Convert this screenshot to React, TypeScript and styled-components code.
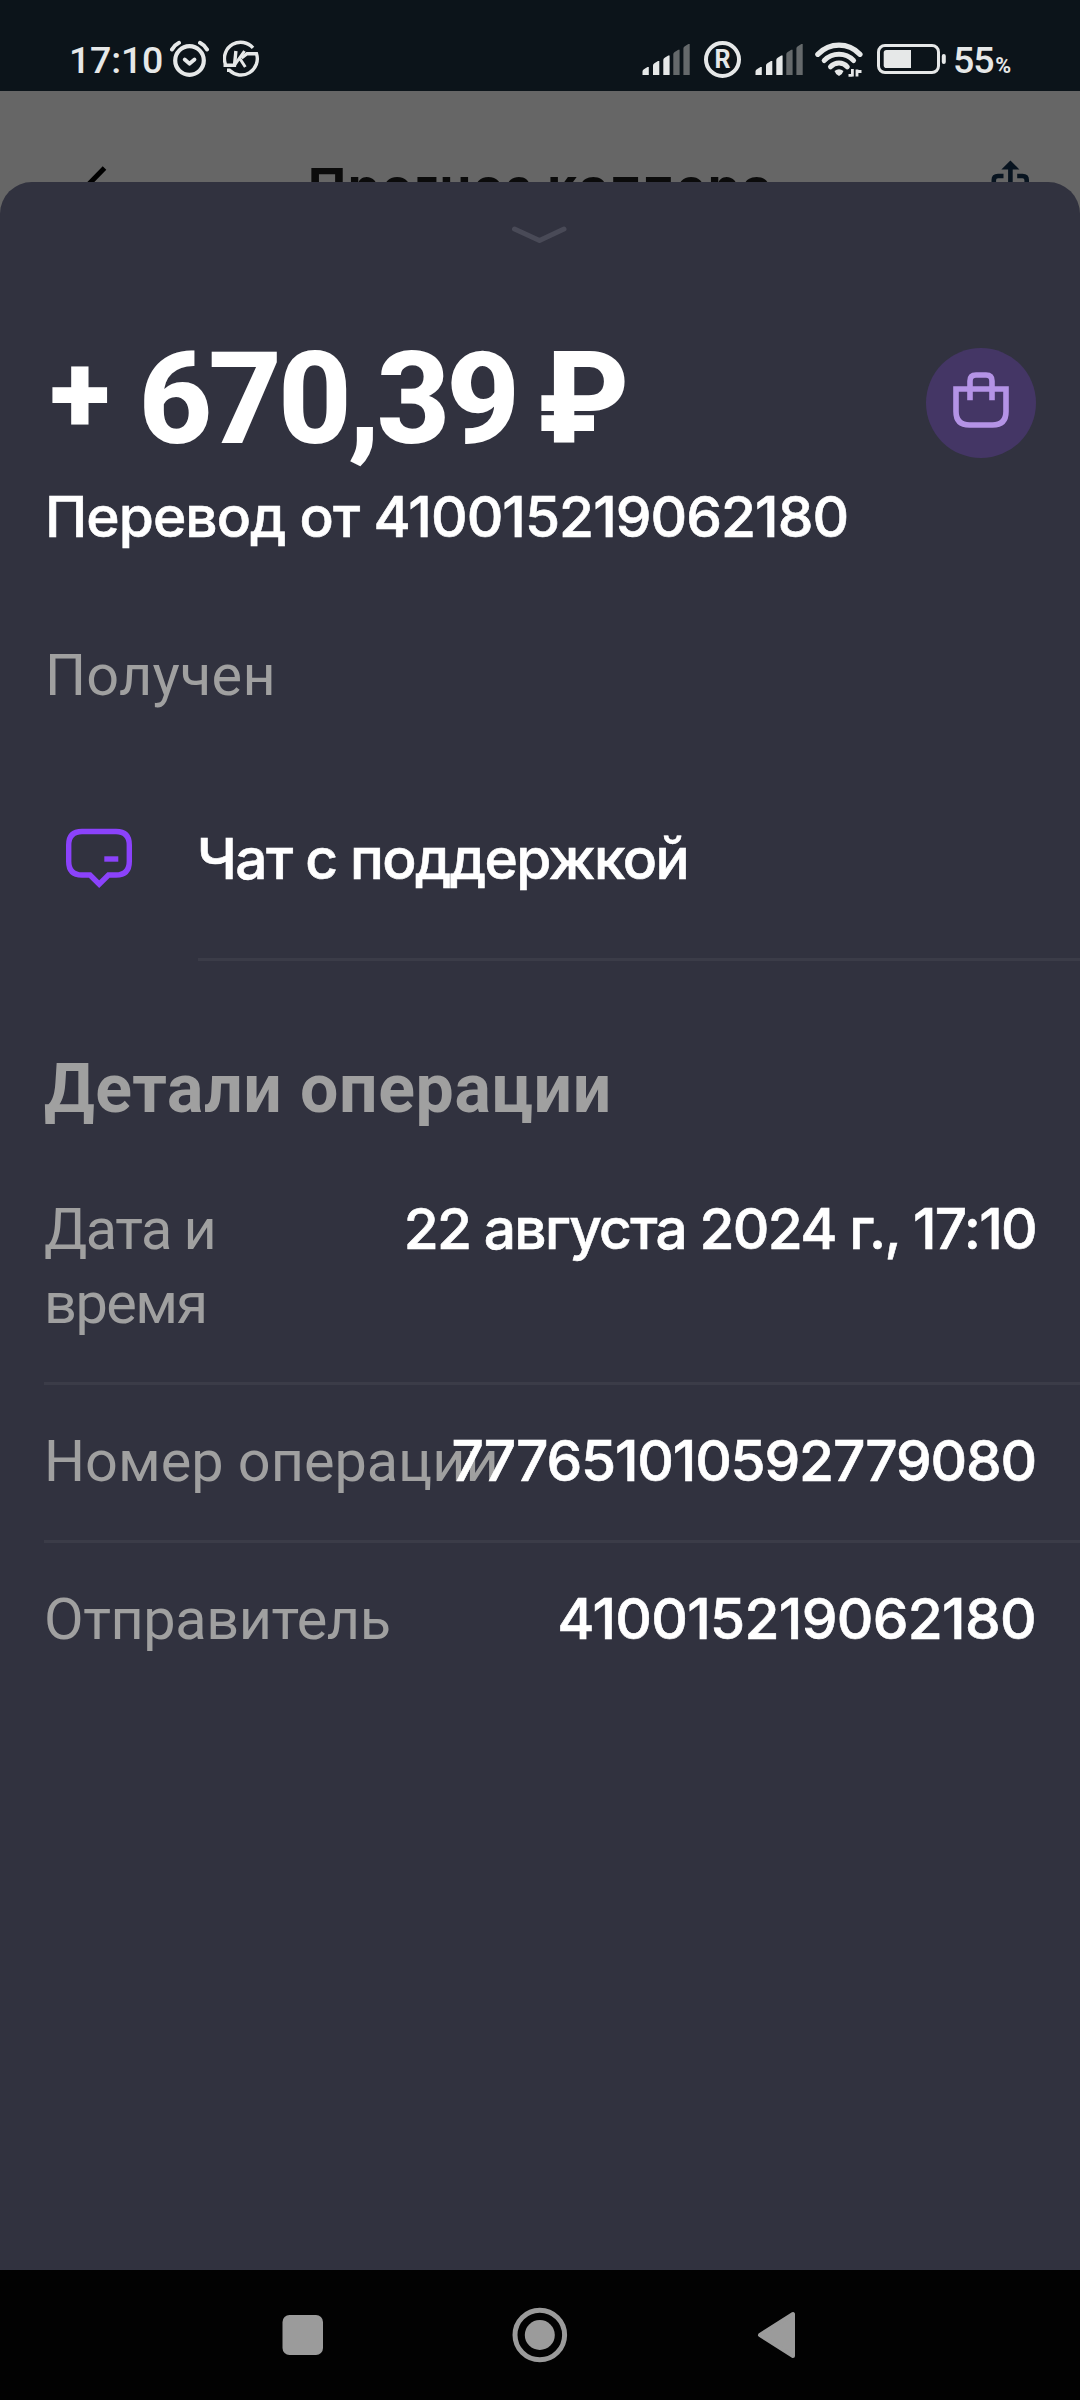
import React from 'react';
import styled, { createGlobalStyle } from 'styled-components';

const GlobalStyle = createGlobalStyle`
  *, *::before, *::after { box-sizing: border-box; }
  body { margin: 0; background: #31323f; }
`;

const ink = '#e6e8e8';

const Screen = styled.div`
  width: 1080px;
  height: 2400px;
  display: flex;
  flex-direction: column;
  overflow: hidden;
  background: #666666;
  font-family: Roboto, 'Noto Sans', sans-serif;
  color: #ffffff;
`;

const StatusBar = styled.header`
  flex: none;
  height: 91px;
  padding: 35px 0 0 69px;
  display: flex;
  align-items: flex-start;
  justify-content: space-between;
  background: #0c141a;
  color: ${ink};
`;

const StatusGroup = styled.div`
  display: flex;
  align-items: flex-start;
  height: 50px;
`;

const StatusIcon = styled.svg<{ $left?: number }>`
  display: block;
  flex: none;
  height: 50px;
  margin-left: ${(p) => p.$left ?? 0}px;
`;

const Clock = styled.span`
  width: 101px;
  font-size: 37.5px;
  font-weight: 500;
  line-height: 50px;
  letter-spacing: -0.2px;
`;

const Registered = styled.span`
  flex: none;
  width: 37px;
  height: 37px;
  margin: 6px 0 0 14px;
  border: 4px solid ${ink};
  border-radius: 50%;
  display: flex;
  align-items: center;
  justify-content: center;
  font-size: 25px;
  font-weight: 700;
  line-height: 29px;
`;

const Charge = styled.span`
  width: 134px;
  padding-left: 7px;
  font-size: 37.5px;
  font-weight: 500;
  line-height: 50px;
  letter-spacing: -1px;
`;

const Percent = styled.small`
  margin-left: 1.5px;
  font-size: 21.5px;
  font-weight: 700;
`;

const PageHeader = styled.div`
  flex: none;
  height: 91px;
  padding: 66px 48px 0 84px;
  display: flex;
  overflow: hidden;
`;

const HeaderTitle = styled.h1`
  flex: 1;
  margin: 0 0 0 178px;
  font-family: Inter, sans-serif;
  font-size: 51px;
  font-weight: 700;
  line-height: 60px;
  letter-spacing: 1.6px;
  color: #0b0b0b;
  white-space: nowrap;
`;

const HeaderIcon = styled.svg`
  display: block;
  flex: none;
  width: 46px;
  height: 46px;
`;

const SheetBackdrop = styled.div`
  flex: none;
  height: 2088px;
  background: linear-gradient(#666666 0 60px, #31323f 60px);
`;

const Sheet = styled.main`
  height: 2088px;
  border-radius: 32px 32px 0 0;
  background: #31323f;
  display: flex;
  flex-direction: column;
`;

const Grabber = styled.svg`
  display: block;
  flex: none;
  width: 60px;
  height: 20px;
  margin: 44px auto 92px;
`;

const Summary = styled.section`
  flex: none;
  display: flex;
  justify-content: space-between;
  padding: 0 44px 0 45px;
`;

const Amount = styled.div`
  margin-left: 5px;
  font-size: 128px;
  font-weight: 800;
  line-height: 122px;
  height: 120px;
  letter-spacing: -4.1px;
  word-spacing: -6px;
  white-space: nowrap;
`;

const Sign = styled.span`
  margin-right: 11px;
  font-size: 112px;
  font-weight: 900;
  line-height: 0;
  vertical-align: 11px;
`;

const Category = styled.div`
  width: 110px;
  height: 110px;
  margin-top: 10px;
  border-radius: 50%;
  background: #443665;
`;

const Value = styled.p<{ $spacing: number }>`
  margin: 0;
  font-family: Inter, sans-serif;
  font-size: 56.8px;
  font-weight: 500;
  -webkit-text-stroke: 0.6px #ffffff;
  line-height: 74px;
  letter-spacing: ${(p) => p.$spacing}px;
  white-space: nowrap;
`;

const Label = styled.p<{ $spacing: number; $nowrap?: boolean }>`
  margin: 0;
  padding-top: 1px;
  font-size: 57.6px;
  font-weight: 400;
  line-height: 74px;
  letter-spacing: ${(p) => p.$spacing}px;
  color: #a0a0a0;
  white-space: ${(p) => (p.$nowrap ? 'nowrap' : 'normal')};
`;

const Description = styled.div`
  padding: 22px 45px 0;
`;

const Status = styled.div`
  padding: 84px 45px 0;
`;

const SupportRow = styled.div`
  display: flex;
  margin-top: 108px;
  padding-left: 62px;
`;

const SupportBody = styled.div`
  flex: 1;
  margin-left: 63px;
  height: 140px;
  border-bottom: 3px solid #3b3c48;
`;

const SupportLabel = styled.div`
  padding-top: 1px;
  margin-left: -1px;
`;

const SectionTitle = styled.h2`
  margin: 88px 0 24px 44px;
  font-size: 68px;
  font-weight: 700;
  line-height: 80px;
  letter-spacing: 0.64px;
  color: #a0a0a0;
`;

const DetailRow = styled.div<{ $last?: boolean }>`
  display: flex;
  margin-left: 44px;
  padding: 39px 44px 41px 0;
  border-bottom: ${(p) => (p.$last ? 'none' : '3px solid #3b3c48')};
`;

const DetailLabel = styled.div`
  flex: 1 1 0;
  min-width: 0;
  max-width: 230px;
`;

const DetailValue = styled.div`
  flex: none;
  margin-left: auto;
`;

const NavBar = styled.nav`
  flex: none;
  height: 130px;
  padding: 0 280px;
  display: flex;
  align-items: center;
  justify-content: space-between;
  background: #020202;
`;

const NavIcon = styled.svg`
  display: block;
  width: 56px;
  height: 56px;
`;

function Signal({ left }: { left?: number }) {
  const bars = [
    { x: 0.5, top: 67, on: true },
    { x: 11, top: 61, on: true },
    { x: 21.3, top: 55.5, on: true },
    { x: 31.3, top: 49.7, on: false },
    { x: 41.4, top: 44, on: false },
  ];
  return (
    <StatusIcon $left={left} width="48" viewBox="0 35 48 50">
      {bars.map((b) => (
        <path
          key={b.x}
          d={`M${b.x} ${b.top + 4.5}Q${b.x} ${b.top + 3} ${b.x + 1.4} ${b.top + 2.2}L${b.x + 5} ${b.top}H${b.x + 6.3}V75H${b.x}Z`}
          fill={b.on ? ink : '#65696b'}
        />
      ))}
    </StatusIcon>
  );
}

const details = [
  { label: 'Дата и время', value: '22 августа 2024 г., 17:10', ls: -1.5, vs: -1.7, nowrap: false },
  { label: 'Номер операции', value: '777651010592779080', ls: 0, vs: -1.2, nowrap: true },
  { label: 'Отправитель', value: '410015219062180', ls: -0.4, vs: -0.7, nowrap: true },
];

export default function App() {
  return (
    <Screen>
      <GlobalStyle />
      <StatusBar>
        <StatusGroup>
          <Clock>17:10</Clock>
          <StatusIcon width="40" viewBox="170 35 40 50" fill="none" stroke={ink} strokeLinecap="round" strokeLinejoin="round">
            <circle cx="189.5" cy="60.5" r="14.3" strokeWidth="4.2" />
            <path d="M184.7 59.5L189.4 63.7L194.5 59.5" strokeWidth="3.8" />
            <path d="M172 49.5Q174.500 45 179 42.800M207 49.500Q204.500 45 200 42.800" strokeWidth="4" />
          </StatusIcon>
          <StatusIcon $left={13} width="37" viewBox="0 -6 37 50" fill="none" stroke={ink} strokeWidth="3.400">
            <path d="M30 6.800A16.300 16.300 0 0 0 2.200 22.500V24.200H11.500L12.900 10" />
            <path d="M11.500 24.200L21.500 10M16.800 17.500L22.300 26" strokeWidth="3" />
            <path d="M18.500 17L24 12.700H33.500A16.300 16.300 0 0 1 6.500 29.300H4" />
          </StatusIcon>
        </StatusGroup>
        <StatusGroup>
          <Signal />
          <Registered>R</Registered>
          <Signal left={14} />
          <StatusIcon $left={12} width="48" viewBox="0 -7 48 50" fill="none" stroke={ink}>
            <path d="M2.800 12.300Q12 3.200 24 3.200T45 12.300" strokeWidth="5.200" strokeLinecap="round" />
            <path d="M9.200 18.500Q15.500 12.300 24 12.300T38.600 18.500" strokeWidth="5" strokeLinecap="round" />
            <path d="M15.500 24.800Q19 21 24 21T32.300 24.800" strokeWidth="5" strokeLinecap="round" />
            <path d="M19.500 29Q24 25.700 28.500 29Q28 31.500 24 34Q20 31.500 19.500 29Z" fill={ink} stroke="none" />
            <path d="M37.400 27V34.500M37.400 33.300H33.500M42 34.500V27.500M42 29.500H46.500" strokeWidth="2.800" />
          </StatusIcon>
          <StatusIcon $left={14} width="69" viewBox="877 35 69 50">
            <rect x="878.500" y="45.500" width="60" height="27" rx="6.500" fill="none" stroke={ink} strokeWidth="3" />
            <path d="M886.500 50H911V68H886.500Q883.700 68 883.700 65.200V52.800Q883.700 50 886.500 50Z" fill={ink} />
            <rect x="941.800" y="54" width="4" height="10" rx="2" fill={ink} />
          </StatusIcon>
          <Charge>
            55<Percent>%</Percent>
          </Charge>
        </StatusGroup>
      </StatusBar>

      <PageHeader>
        <HeaderIcon viewBox="84 157 46 46" fill="none" stroke="#000000" strokeWidth="5">
          <path d="M104.500 168L84 189L104.500 210" />
        </HeaderIcon>
        <HeaderTitle>Прогноз каппера</HeaderTitle>
        <HeaderIcon viewBox="986 157 46 46" fill="none" stroke="#081420" strokeWidth="4.600">
          <path d="M1003.500 176H998Q993.800 176 993.800 180V202M1017.200 176H1022.500Q1026.700 176 1026.700 180V202M1010.400 168V195" />
          <path d="M1010.400 160.500L1019.400 169.500H1001.400Z" fill="#081420" stroke="none" />
        </HeaderIcon>
      </PageHeader>

      <SheetBackdrop>
        <Sheet>
          <Grabber viewBox="0 0 60 20" fill="none" stroke="#494a57" strokeWidth="5" strokeLinecap="round" strokeLinejoin="round">
            <path d="M4.500 3L29.500 14.500L54 3" />
          </Grabber>

          <Summary>
            <Amount>
              <Sign>+</Sign> 670,39 ₽
            </Amount>
            <Category>
              <svg width="110" height="110" viewBox="926 348 110 110" fill="none" stroke="#b493e6" strokeWidth="5.600">
                <path d="M956 389H1006V411.500Q1006 425 992.500 425H969.500Q956 425 956 411.500Z" />
                <path d="M970 400.300V381Q970 375 976 375H986Q992 375 992 381V400.300" />
              </svg>
            </Category>
          </Summary>
          <Description>
            <Value $spacing={-0.96}>Перевод от 410015219062180</Value>
          </Description>
          <Status>
            <Label $spacing={0.25}>Получен</Label>
          </Status>

          <SupportRow>
            <svg width="73" height="74" viewBox="62 821 73 74" fill="none" stroke="#8b42fb" strokeWidth="5.400">
              <path d="M82 831.500H116Q129.300 831.500 129.300 845V861.500Q129.300 875 116 875H108.500L99.200 884.200L90 875H82Q68.700 875 68.700 861.500V845Q68.700 831.500 82 831.500Z" />
              <path d="M104.300 859H118.300" />
            </svg>
            <SupportBody>
              <SupportLabel>
                <Value $spacing={-1.6}>Чат с поддержкой</Value>
              </SupportLabel>
            </SupportBody>
          </SupportRow>

          <SectionTitle>Детали операции</SectionTitle>
          {details.map((d, i) => (
            <DetailRow key={d.label} $last={i === details.length - 1}>
              <DetailLabel>
                <Label $spacing={d.ls} $nowrap={d.nowrap}>{d.label}</Label>
              </DetailLabel>
              <DetailValue>
                <Value $spacing={d.vs}>{d.value}</Value>
              </DetailValue>
            </DetailRow>
          ))}
        </Sheet>
      </SheetBackdrop>

      <NavBar>
        <NavIcon viewBox="280 2307 56 56">
          <rect x="282.500" y="2315" width="40.500" height="40" rx="7" fill="#9b9b9b" />
        </NavIcon>
        <NavIcon viewBox="0 0 56 56">
          <circle cx="27.800" cy="28" r="24.800" fill="none" stroke="#9b9b9b" strokeWidth="5" />
          <circle cx="27.800" cy="28" r="15" fill="#9b9b9b" />
        </NavIcon>
        <NavIcon viewBox="744 2307 56 56">
          <path d="M760 2335L793 2314V2356Z" fill="#9b9b9b" stroke="#9b9b9b" strokeWidth="4" strokeLinejoin="round" />
        </NavIcon>
      </NavBar>
    </Screen>
  );
}
